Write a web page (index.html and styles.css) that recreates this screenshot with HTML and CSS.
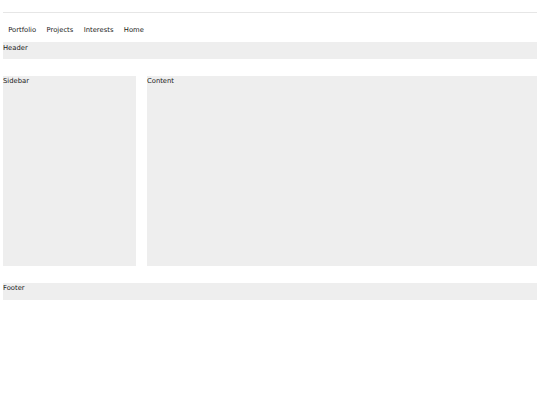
FILE: index.html
```html
<!DOCTYPE html>
<html>
<head>
<meta charset="utf-8">
<link rel="stylesheet" href="styles.css">
</head>
<body>
<div class="page">
  <div class="topbar"></div>
  <nav class="nav">
    <span class="nav-item">Portfolio</span>
    <span class="nav-item">Projects</span>
    <span class="nav-item">Interests</span>
    <span class="nav-item">Home</span>
  </nav>
  <header class="box header">Header</header>
  <div class="main">
    <aside class="box sidebar">Sidebar</aside>
    <section class="box content">Content</section>
  </div>
  <footer class="box footer">Footer</footer>
</div>
</body>
</html>
```
FILE: styles.css
```css
html, body {
  margin: 0;
  padding: 0;
  background: #ffffff;
}
body {
  font-family: "DejaVu Sans", Verdana, sans-serif;
  font-size: 6.8px;
  color: #1a1a1a;
}
.page {
  padding: 0 3px;
}
.topbar {
  height: 12.33px;
  border-bottom: 1.33px solid #e6e6e6;
}
.nav {
  display: flex;
  padding: 13.8px 0 7.44px 0;
  line-height: 7.76px;
}
.nav-item {
  padding: 0 5.2px;
}
.box {
  background: #eeeeee;
  line-height: 8.5px;
  padding-top: 1.2px;
  box-sizing: border-box;
}
.header {
  height: 16.67px;
}
.main {
  display: flex;
  gap: 10.67px;
  margin-top: 16.67px;
}
.sidebar {
  width: 133.33px;
  height: 190px;
}
.content {
  flex: 1;
}
.footer {
  margin-top: 17px;
  height: 17px;
}
```
